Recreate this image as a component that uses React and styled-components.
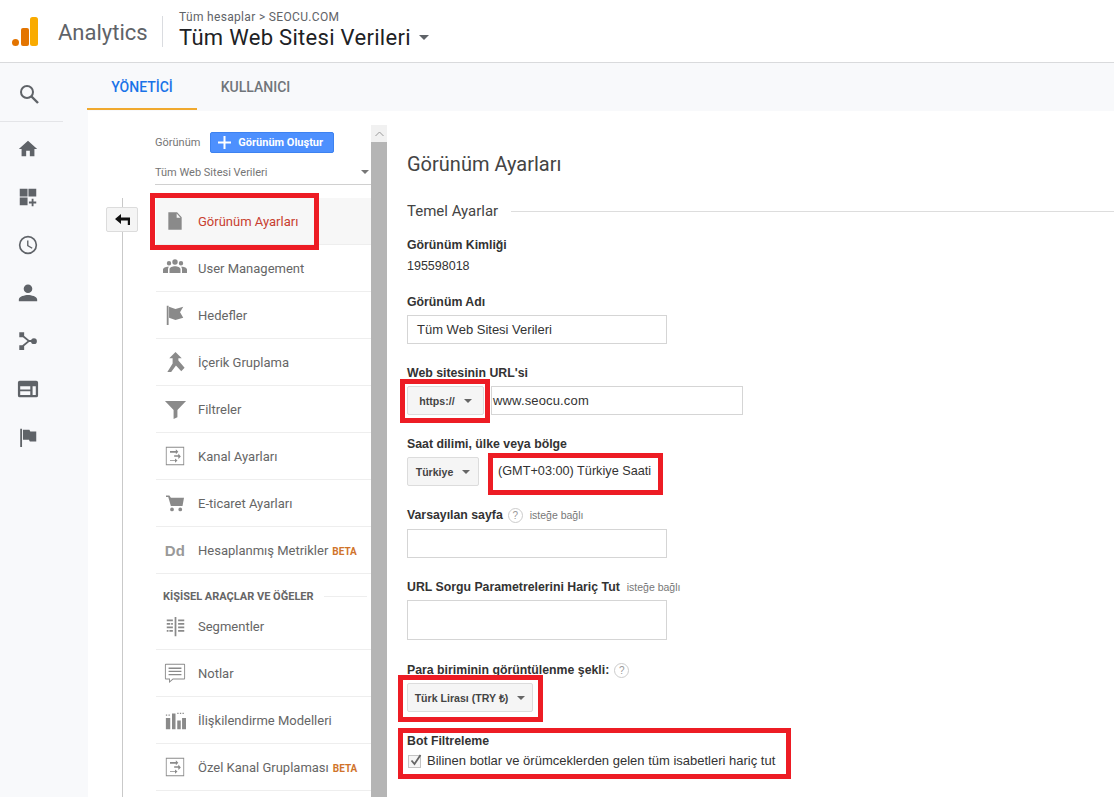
import React from 'react'
import styled, { createGlobalStyle } from 'styled-components'

const Global = createGlobalStyle`
  html, body { margin: 0; height: 100%; overflow: hidden; background: #fff; }
  body { font-family: "Liberation Sans", Arial, sans-serif; }
  * { box-sizing: border-box; }
`

const Page = styled.div`
  width: 1114px;
  height: 797px;
  display: flex;
  flex-direction: column;
  overflow: hidden;
  background: #f8f9fb;
`

const Header = styled.header`
  height: 63px;
  flex: none;
  display: flex;
  align-items: center;
  background: #fff;
  border-bottom: 1px solid #d9dadc;
`

const Logo = styled.svg`
  width: 26px;
  height: 29px;
  margin: 0 0 0 12px;
`

const Brand = styled.div`
  margin-left: 20px;
  width: 105px;
  height: 31px;
  border-right: 1px solid #dadce0;
  font: 400 22px/33px Roboto, sans-serif;
  color: #5f6368;
`

const Crumbs = styled.div`
  margin-left: 16px;
  display: flex;
  flex-direction: column;
  padding-bottom: 1px;
`

const Crumb = styled.div`
  font: 400 12px/14px Roboto, sans-serif;
  letter-spacing: 0.33px;
  color: #5f6368;
`

const ViewTitle = styled.div`
  font: 400 22px/28px Roboto, sans-serif;
  letter-spacing: 0.3px;
  color: #202124;
  display: flex;
  align-items: center;
  gap: 8px;
`

const Caret = styled.span`
  display: inline-block;
  width: 0;
  height: 0;
  border-left: ${p => p.$size || 4}px solid transparent;
  border-right: ${p => p.$size || 4}px solid transparent;
  border-top: ${p => p.$size || 4}px solid ${p => p.$color || '#5f6368'};
`

const Body = styled.div`
  flex: 1;
  display: flex;
  min-height: 0;
`

const Rail = styled.nav`
  width: 88px;
  flex: none;
  padding-top: 13px;
`

const RailSearch = styled.div`
  width: 63px;
  height: 46px;
  padding: 8px 0 0 19px;
  border-bottom: 1px solid #e4e5e8;
  margin-bottom: 3px;
`

const RailItem = styled.div`
  height: 48px;
  padding: 13px 0 0 17px;
  color: #5f6368;
  svg { display: block; }
`

const Main = styled.div`
  flex: 1;
  display: flex;
  flex-direction: column;
  min-width: 0;
`

const Tabs = styled.div`
  height: 48px;
  flex: none;
  display: flex;
  margin-left: -1px;
`

const Tab = styled.div`
  width: ${p => p.$width}px;
  height: 47px;
  display: flex;
  justify-content: center;
  align-items: center;
  padding-top: 3px;
  font: 500 14px Roboto, sans-serif;
  color: ${p => (p.$active ? '#1a73e8' : '#70757a')};
  border-bottom: 2px solid ${p => (p.$active ? '#f0a92e' : 'transparent')};
`

const Panel = styled.div`
  flex: 1;
  min-height: 0;
  display: flex;
  background: #fff;
`

const Gutter = styled.div`
  width: 67px;
  flex: none;
  position: relative;
  &::before {
    content: '';
    position: absolute;
    left: 34px;
    top: 87px;
    bottom: 0;
    width: 1px;
    background: #c9c9c9;
  }
`

const BackButton = styled.div`
  position: absolute;
  left: 18px;
  top: 96px;
  width: 32px;
  height: 25px;
  display: flex;
  align-items: center;
  justify-content: center;
  background: #f5f5f5;
  border: 1px solid #dcdcdc;
  border-radius: 2px;
`

const Views = styled.div`
  width: 216px;
  flex: none;
`

const ViewPicker = styled.div`
  height: 87px;
  padding-top: 21px;
`

const PickerHead = styled.div`
  display: flex;
  align-items: center;
  height: 21px;
  font: 400 11px Roboto, sans-serif;
  color: #757575;
`

const CreateButton = styled.div`
  margin-left: 10px;
  width: 124px;
  height: 21px;
  display: flex;
  align-items: center;
  padding-left: 7px;
  gap: 7px;
  background: #4d90fe;
  border: 1px solid #3d82f0;
  border-radius: 2px;
  font: 700 11px Roboto, sans-serif;
  color: #fff;
`

const PickerSelect = styled.div`
  margin-top: 10px;
  height: 22px;
  width: 216px;
  display: flex;
  align-items: center;
  justify-content: space-between;
  padding: 0 2px 3px 0;
  border-bottom: 1px solid #d0d0d0;
  font: 400 11px Roboto, sans-serif;
  color: #757575;
`

const Row = styled.div`
  position: relative;
  height: 47px;
  margin-left: 1px;
  display: flex;
  align-items: center;
  border-bottom: 1px solid #eee;
  background: ${p => (p.$active ? '#f7f7f7' : 'transparent')};
`

const RowIcon = styled.div`
  width: 42px;
  flex: none;
  display: flex;
  justify-content: center;
  padding-right: 4px;
  color: #8a8a8a;
`

const Glyph = styled.span`
  font: 700 15px "Liberation Sans", Arial, sans-serif;
  letter-spacing: 0.3px;
  color: #999;
`

const RowLabel = styled.span`
  font: 400 13px Roboto, sans-serif;
  color: ${p => (p.$active ? '#c8402f' : '#666')};
`

const Beta = styled.span`
  margin: 2px 0 0 4px;
  font: 700 10px Roboto, sans-serif;
  color: #d0742c;
`

const SectionHead = styled.div`
  height: 29px;
  padding-top: 16px;
  display: flex;
  align-items: center;
  gap: 10px;
  padding-left: 8px;
  padding-right: 4px;
  font: 700 11px Roboto, sans-serif;
  color: #666;
  &::after {
    content: '';
    flex: 1;
    height: 1px;
    background: #eee;
  }
`

const Scrollbar = styled.div`
  width: 16px;
  flex: none;
  margin-top: 14px;
  display: flex;
  flex-direction: column;
`

const ScrollUp = styled.div`
  height: 17px;
  background: #f1f1f1;
  display: flex;
  align-items: center;
  justify-content: center;
`

const ScrollThumb = styled.div`
  flex: 1;
  background: #b5b5b5;
`

const Content = styled.main`
  flex: 1;
  min-width: 0;
  padding: 42px 0 0 20px;
`

const PageTitle = styled.h1`
  margin: 0;
  font: 400 20px/22px Roboto, sans-serif;
  color: #444;
`

const SectionTitle = styled.div`
  margin-top: 26px;
  display: flex;
  align-items: center;
  gap: 13px;
  font: 400 15px/20px Roboto, sans-serif;
  color: #444;
  &::after {
    content: '';
    flex: 1;
    height: 1px;
    background: #ddd;
  }
`

const Field = styled.div`
  position: relative;
  margin-top: ${p => p.$top}px;
`

const Label = styled.div`
  display: flex;
  align-items: center;
  height: 14px;
  font: 700 12.3px "Liberation Sans", Arial, sans-serif;
  color: #333;
`

const Value = styled.div`
  margin-top: 6px;
  font: 400 12.5px/16px "Liberation Sans", Arial, sans-serif;
  color: #333;
`

const Optional = styled.span`
  margin-left: 7px;
  font: 400 10.5px "Liberation Sans", Arial, sans-serif;
  color: #777;
`

const Help = styled.span`
  margin-left: 5px;
  width: 15px;
  height: 15px;
  border-radius: 50%;
  border: 1px solid #ccc;
  display: inline-flex;
  align-items: center;
  justify-content: center;
  font: 400 10px "Liberation Sans", Arial, sans-serif;
  color: #999;
`

const Input = styled.div`
  width: ${p => p.$width || 260}px;
  height: ${p => p.$height || 29}px;
  margin-top: ${p => (p.$gap === undefined ? 6 : p.$gap)}px;
  margin-left: ${p => p.$left || 0}px;
  display: flex;
  align-items: center;
  padding-left: ${p => p.$pad || 9}px;
  border: 1px solid #d5d5d5;
  font: 400 13px "Liberation Sans", Arial, sans-serif;
  letter-spacing: ${p => p.$spacing || 0}px;
  color: #333;
`

const Controls = styled.div`
  position: relative;
  margin-top: 6px;
  display: flex;
  align-items: center;
`

const SelectButton = styled.div`
  width: ${p => p.$width}px;
  height: 29px;
  display: flex;
  align-items: center;
  justify-content: center;
  gap: 9px;
  background: #f5f5f5;
  border: 1px solid #dcdcdc;
  border-radius: 2px;
  font: 700 10.6px "Liberation Sans", Arial, sans-serif;
  color: #444;
`

const PlainValue = styled.span`
  margin-left: 19px;
  padding-bottom: 1px;
  font: 400 12.7px "Liberation Sans", Arial, sans-serif;
  color: #333;
`

const CheckRow = styled.div`
  display: flex;
  align-items: center;
  gap: 6px;
  margin: 5px 0 0 1px;
  font: 400 13px/16px "Liberation Sans", Arial, sans-serif;
  color: #333;
`

const CheckBox = styled.span`
  width: 13px;
  height: 13px;
  flex: none;
  border: 1px solid #c4c4c4;
  background: #f5f5f5;
  position: relative;
  svg { position: absolute; left: 0; top: -3px; }
`

// red marks drawn over the screenshot
const Mark = styled.div`
  position: absolute;
  top: ${p => p.$top}px;
  left: ${p => p.$left}px;
  width: ${p => p.$width}px;
  height: ${p => p.$height}px;
  border: ${p => p.$weight || 4}px solid #ed1c24;
  pointer-events: none;
`

const Icon = ({ size = 20, view = 24, children }) => (
  <svg width={size} height={size} viewBox={`0 0 ${view} ${view}`} fill="currentColor">{children}</svg>
)

const railIcons = [
  <path key="h" d="M10 20v-6h4v6h5v-8h3L12 3 2 12h3v8z" />,
  <path key="d" d="M3 3h8.500v8.500H3zM12.500 3H21v8.500h-8.500zM3 12.500h8.500V21H3zM16 14h2v3h3v2h-3v3h-2v-3h-3v-2h3z" />,
  <path key="c" d="M12 2a10 10 0 1 0 0 20 10 10 0 0 0 0-20zm0 18.200a8.200 8.200 0 1 1 0-16.400 8.200 8.200 0 0 1 0 16.400zM12.500 7H11v6l5.200 3.100.8-1.200-4.500-2.700z" />,
  <path key="p" d="M12 12a4.700 4.700 0 1 0 0-9.400 4.700 4.700 0 0 0 0 9.400zm0 2.200c-3.300 0-10 1.600-10 5V21h20v-1.800c0-3.400-6.700-5-10-5z" />,
  <path key="s" d="M2.500 2.500h5.300v5.300H2.500zM2.500 16.500h5.300v5.300H2.500zM18.500 9a3.200 3.200 0 1 1 0 6.400 3.200 3.200 0 0 1 0-6.400zM7 5.800l6.200 5.200h3v2h-3L7 18.200l-1.200-1.500 5.700-4.700-5.700-4.700z" />,
  <path key="w" fillRule="evenodd" d="M3 3h18a2 2 0 0 1 2 2v14a2 2 0 0 1-2 2H3a2 2 0 0 1-2-2V5a2 2 0 0 1 2-2zm.5 6v3.500h11V9zm13.500 0v9.500h3.500V9zM3.500 14.500v4h11v-4z" />,
  <path key="f" d="M3.500 3h2v20h-2zM6.500 4h7l1 2H21v11h-7l-1-2H6.500z" />,
]

const channelIcon = (
  <g>
    <path fillRule="evenodd" d="M1 1h22v22H1zm1 1v20h20V2z" />
    <path d="M6 6h7v-2l3 3-3 3V8H6zM11 11h5v-2l3 3.500-3 3V13h-5zM6 17h6v-2l3 2.500-3 2.500v-2H6z" />
  </g>
)

const navTop = [
  { label: 'Görünüm Ayarları', active: true, size: 20, icon: <path d="M4 1.500h10.500L20 7.500v15H4zM14 3v5h4.600z" fillRule="evenodd" /> },
  { label: 'User Management', size: 24, icon: <path d="M6 9.500a2.200 2.200 0 1 0 0-4.400 2.200 2.200 0 0 0 0 4.400zm6-.8a2.700 2.700 0 1 0 0-5.400 2.700 2.700 0 0 0 0 5.400zm6 .8a2.200 2.200 0 1 0 0-4.400 2.200 2.200 0 0 0 0 4.400zM0 17v-3.500c0-1.500 2.500-2.800 5-2.800l1 .1c-.6.600-1 1.500-1 2.200v4zm6.500 0v-3.800c0-1.700 3-2.900 5.500-2.900s5.500 1.200 5.500 2.900V17zm12.500 0v-4c0-.7-.4-1.600-1-2.200l1-.1c2.500 0 5 1.300 5 2.800V17z" /> },
  { label: 'Hedefler', size: 22, icon: <path d="M3 2h2v21H3zM5.500 3l7 2.500L21 3l-3.500 6 3.500 6-8.500 2.500-7-2.500z" /> },
  { label: 'İçerik Gruplama', size: 23, icon: <path d="M12 1l6.500 6.500H15V10l6.500 7.500L18 21l-5.500-6-5 7H3.500L9 13V7.500H5.500z" /> },
  { label: 'Filtreler', size: 23, icon: <path d="M1 3h22l-9 9.500V20l-4 2v-9.500z" /> },
  { label: 'Kanal Ayarları', size: 20, icon: channelIcon },
  { label: 'E-ticaret Ayarları', size: 18, icon: <path d="M0 2h4.500l2 3H24l-2 11H6.500L3 4H0zM8 18a2.500 2.500 0 1 1 0 5 2.500 2.500 0 0 1 0-5zm11 0a2.500 2.500 0 1 1 0 5 2.500 2.500 0 0 1 0-5z" /> },
  { label: 'Hesaplanmış Metrikler', beta: true, text: 'Dd' },
]

const navPersonal = [
  { label: 'Segmentler', size: 21, icon: <path d="M11 1h2v22h-2zM2 4h7v2H2zM2 8h4v2H2zM7 8h2v2H7zM2 12h7v2H2zM2 16h2v2H2zM5 16h4v2H5zM15 4h7v2h-7zM15 8h7v2h-7zM15 12h7v2h-7zM15 16h7v2h-7z" /> },
  { label: 'Notlar', size: 22, icon: <path fillRule="evenodd" d="M2 2h20a1 1 0 0 1 1 1v15a1 1 0 0 1-1 1H10l-4.500 4v-4H2a1 1 0 0 1-1-1V3a1 1 0 0 1 1-1zm0 1v15h4.500v2.800L9.600 18H22V3zM5 6h14v1.500H5zm0 3.500h14V11H5zm0 3.500h14v1.500H5z" /> },
  { label: 'İlişkilendirme Modelleri', size: 21, icon: <path d="M1 9h5v13H1zM8 4h4v18H8zM14 12h4v10h-4zM19.500 9H24v13h-4.500zM1 5h1.500v1.500H1zM4 5h1.500v1.500H4zM14 3h1.500v1.500H14zM17 3h1.500v1.500H17zM20 3h1.500v1.500H20z" /> },
  { label: 'Özel Kanal Gruplaması', beta: true, size: 20, icon: channelIcon },
]

const NavRow = ({ item }) => (
  <Row $active={item.active}>
    <RowIcon>
      {item.text ? <Glyph>{item.text}</Glyph> : <Icon size={item.size}>{item.icon}</Icon>}
    </RowIcon>
    <RowLabel $active={item.active}>{item.label}</RowLabel>
    {item.beta && <Beta>BETA</Beta>}
    {item.active && <Mark $top={-5} $left={-6} $width={169} $height={57} $weight={5} />}
  </Row>
)

export default function App() {
  return (
    <Page>
      <Global />
      <Header>
        <Logo viewBox="0 0 26 29">
          <rect x="0" y="22" width="7" height="7" rx="3.500" fill="#e37400" />
          <rect x="9" y="11" width="8" height="18" rx="2" fill="#e37400" />
          <rect x="18" y="0" width="8" height="29" rx="2.500" fill="#f9ab00" />
        </Logo>
        <Brand>Analytics</Brand>
        <Crumbs>
          <Crumb>Tüm hesaplar &gt; SEOCU.COM</Crumb>
          <ViewTitle>Tüm Web Sitesi Verileri <Caret $size={5} /></ViewTitle>
        </Crumbs>
      </Header>
      <Body>
        <Rail>
          <RailSearch>
            <svg width="20" height="20" viewBox="0 0 20 20" fill="none" stroke="#5f6368" strokeWidth="2">
              <circle cx="8" cy="8" r="6" />
              <path d="M12.500 12.500L19 19" strokeWidth="2.400" />
            </svg>
          </RailSearch>
          {railIcons.map((icon, i) => (
            <RailItem key={i}><Icon size={22}>{icon}</Icon></RailItem>
          ))}
        </Rail>
        <Main>
          <Tabs>
            <Tab $width={110} $active>YÖNETİCİ</Tab>
            <Tab $width={117}>KULLANICI</Tab>
          </Tabs>
          <Panel>
            <Gutter>
              <BackButton>
                <svg width="15" height="11" viewBox="0 0 15 11">
                  <path d="M0 5l6-5v3.500h9V11h-2.200V6.500H6V10z" fill="#111" />
                </svg>
              </BackButton>
            </Gutter>
            <Views>
              <ViewPicker>
                <PickerHead>
                  Görünüm
                  <CreateButton>
                    <svg width="13" height="13" viewBox="0 0 13 13"><path d="M5.500 0h2v5.500H13v2H7.500V13h-2V7.500H0v-2h5.500z" fill="#fff" /></svg>
                    Görünüm Oluştur
                  </CreateButton>
                </PickerHead>
                <PickerSelect>Tüm Web Sitesi Verileri <Caret $color="#777" /></PickerSelect>
              </ViewPicker>
              {navTop.map(item => <NavRow key={item.label} item={item} />)}
              <SectionHead>KİŞİSEL ARAÇLAR VE ÖĞELER</SectionHead>
              {navPersonal.map(item => <NavRow key={item.label} item={item} />)}
            </Views>
            <Scrollbar>
              <ScrollUp>
                <svg width="9" height="6" viewBox="0 0 9 6" fill="none" stroke="#999"><path d="M.5 5l4-4 4 4" /></svg>
              </ScrollUp>
              <ScrollThumb />
            </Scrollbar>
            <Content>
              <PageTitle>Görünüm Ayarları</PageTitle>
              <SectionTitle>Temel Ayarlar</SectionTitle>
              <Field $top={17}>
                <Label>Görünüm Kimliği</Label>
                <Value>195598018</Value>
              </Field>
              <Field $top={21}>
                <Label>Görünüm Adı</Label>
                <Input>Tüm Web Sitesi Verileri</Input>
              </Field>
              <Field $top={22}>
                <Label>Web sitesinin URL'si</Label>
                <Controls>
                  <SelectButton $width={77}>https:// <Caret $color="#666" /></SelectButton>
                  <Input $gap={0} $left={7} $width={252} $pad={1} $spacing={0.15}>www.seocu.com</Input>
                  <Mark $top={-7} $left={-7} $width={90} $height={44} $weight={5} />
                </Controls>
              </Field>
              <Field $top={22}>
                <Label>Saat dilimi, ülke veya bölge</Label>
                <Controls>
                  <SelectButton $width={72}>Türkiye <Caret $color="#666" /></SelectButton>
                  <PlainValue>(GMT+03:00) Türkiye Saati</PlainValue>
                  <Mark $top={-4} $left={81} $width={175} $height={42} $weight={5} />
                </Controls>
              </Field>
              <Field $top={22}>
                <Label>Varsayılan sayfa <Help>?</Help><Optional>isteğe bağlı</Optional></Label>
                <Input $gap={7} />
              </Field>
              <Field $top={22}>
                <Label>URL Sorgu Parametrelerini Hariç Tut <Optional>isteğe bağlı</Optional></Label>
                <Input $height={40} />
              </Field>
              <Field $top={23}>
                <Label>Para biriminin görüntülenme şekli: <Help>?</Help></Label>
                <Controls>
                  <SelectButton $width={126}>Türk Lirası (TRY ₺) <Caret $color="#666" /></SelectButton>
                  <Mark $top={-8} $left={-9} $width={145} $height={47} $weight={5} />
                </Controls>
              </Field>
              <Field $top={22}>
                <Label>Bot Filtreleme</Label>
                <CheckRow>
                  <CheckBox>
                    <svg width="14" height="14" viewBox="0 0 14 14" fill="none" stroke="#666" strokeWidth="1.800"><path d="M2.500 7.500l3 3.500 6-9" /></svg>
                  </CheckBox>
                  Bilinen botlar ve örümceklerden gelen tüm isabetleri hariç tut
                </CheckRow>
                <Mark $top={-6} $left={-9} $width={393} $height={51} $weight={5} />
              </Field>
            </Content>
          </Panel>
        </Main>
      </Body>
    </Page>
  )
}
